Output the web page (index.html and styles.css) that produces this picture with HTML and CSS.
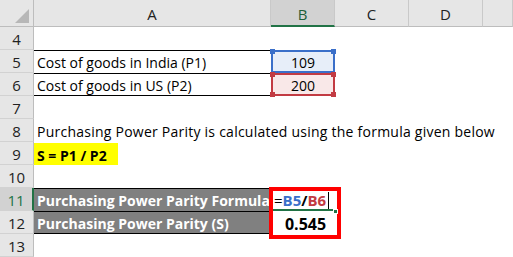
FILE: index.html
```html
<!DOCTYPE html>
<html>
<head>
<meta charset="utf-8">
<link rel="stylesheet" href="styles.css">
</head>
<body>
<div class="sheet">
  <div class="corner"><span class="tri"></span></div>
  <div class="colh">A</div>
  <div class="colh sel">B</div>
  <div class="colh">C</div>
  <div class="colh">D</div>
  <div class="colh"></div>

  <div class="rowh">4</div><div class="row-rest"></div>

  <div class="rowh">5</div>
  <div class="cell a bt">Cost of goods in India (P1)</div>
  <div class="cell ref blue">109<i class="sq tl"></i><i class="sq tr"></i></div>
  <div class="cell rest"></div>

  <div class="rowh">6</div>
  <div class="cell a bt bb">Cost of goods in US (P2)</div>
  <div class="cell ref red">200<i class="sq tl"></i><i class="sq tr"></i><i class="sq bl"></i><i class="sq br"></i></div>
  <div class="cell rest"></div>

  <div class="rowh">7</div><div class="row-rest"></div>

  <div class="rowh">8</div>
  <div class="cell wide spread">Purchasing Power Parity is calculated using the formula given below</div>

  <div class="rowh">9</div>
  <div class="cell wide nopad"><span class="hl">S = P1 / P2</span></div>

  <div class="rowh">10</div><div class="row-rest"></div>

  <div class="rowh selr">11</div>
  <div class="cell a dark bt">Purchasing Power Parity Formula</div>
  <div class="cell edit">=<b class="cb">B5</b><b>/</b><b class="cr">B6</b><span class="caret"></span></div>
  <div class="cell rest"></div>

  <div class="rowh">12</div>
  <div class="cell a dark bt bb">Purchasing Power Parity (S)</div>
  <div class="cell result">0.545</div>
  <div class="cell rest"></div>

  <div class="rowh">13</div><div class="row-rest"></div>

  <div class="redbox"></div>
  <div class="fill"></div>
</div>
</body>
</html>
```

FILE: styles.css
```css
* { box-sizing: border-box; }
html, body { margin: 0; padding: 0; background: #fff; }
body { width: 513px; height: 257px; overflow: hidden; font-family: "Open Sans", "Liberation Sans", sans-serif; }

.sheet {
  position: relative;
  display: grid;
  grid-template-columns: 34px 237px 64px 74px 74px 30px;
  grid-template-rows: 27px repeat(10, 23px);
  font-size: 14px;
  color: #000;
}

.corner {
  background: #e6e6e6;
  border-right: 1px solid #bdbdbd;
  border-bottom: 1px solid #bdbdbd;
  position: relative;
}
.tri {
  position: absolute;
  right: 4px; bottom: 3px;
  width: 0; height: 0;
  border-left: 14px solid transparent;
  border-bottom: 14px solid #b7b7b7;
}

.colh {
  background: #e6e6e6;
  border-right: 1px solid #c9c9c9;
  border-bottom: 1px solid #bdbdbd;
  display: flex; align-items: center; justify-content: center;
  font-size: 15px;
  color: #222;
  padding-top: 2px;
}
.colh.sel {
  background: #d2d2d2;
  color: #1e5f3a;
  border-bottom: 2px solid #217346;
}

.rowh {
  background: #e6e6e6;
  border-right: 1px solid #bdbdbd;
  border-bottom: 1px solid #d2d2d2;
  display: flex; align-items: center; justify-content: center;
  font-size: 15px;
  color: #222;
  padding-top: 1px;
}
.rowh.selr {
  background: #d2d2d2;
  color: #217346;
  border-right: 2px solid #217346;
}

.row-rest { grid-column: 2 / 7; }

.cell {
  display: flex; align-items: center;
  padding: 1px 3px 0;
  white-space: nowrap;
  position: relative;
}
.cell.rest { grid-column: 4 / 7; }
.cell.wide { grid-column: 2 / 7; }
.cell.nopad { padding: 0; align-items: stretch; }
.cell.spread { letter-spacing: 0.24px; }

.bt { border-top: 1px solid #000; }
.bb { border-bottom: 1px solid #000; }

.hl {
  background: #ffff00;
  font-weight: 700;
  padding: 2px 3px 0;
  display: flex; align-items: center;
  width: 84px;
  height: 22px;
  margin-top: 1px;
}

.ref {
  justify-content: center;
  border: 2px solid;
}
.ref.blue { border-color: #3a6fc9; background: #e7eef9; }
.ref.red { border-color: #c23b43; background: #f9e8e8; }
.sq {
  position: absolute;
  width: 5px; height: 5px;
}
.blue .sq { background: #3a6fc9; }
.red .sq { background: #c23b43; }
.sq.tl { left: -3px; top: -3px; }
.sq.tr { right: -3px; top: -3px; }
.sq.bl { left: -3px; bottom: -3px; }
.sq.br { right: -3px; bottom: -3px; }

.dark {
  background: #808080;
  color: #fff;
  font-weight: 700;
  border-right: 1px solid #000;
}

.edit {
  padding-left: 3px;
  padding-top: 3px;
  font-size: 15px;
  border-bottom: 2px solid #217346;
}
.edit b { font-weight: 700; }
.cb { color: #3a6fc9; }
.cr { color: #c23b43; }
.caret {
  display: inline-block;
  width: 1px; height: 17px;
  background: #000;
  margin-left: 2px;
}

.result {
  justify-content: center;
  font-weight: 700;
  font-size: 16px;
  padding-left: 8px;
  padding-top: 2px;
}

.redbox {
  position: absolute;
  left: 269px; top: 187px;
  width: 72px; height: 52px;
  border: 4px solid #ff0000;
}
.fill {
  position: absolute;
  left: 333px; top: 209px;
  width: 5px; height: 5px;
  background: #217346;
  border: 1px solid #fff;
}
```
